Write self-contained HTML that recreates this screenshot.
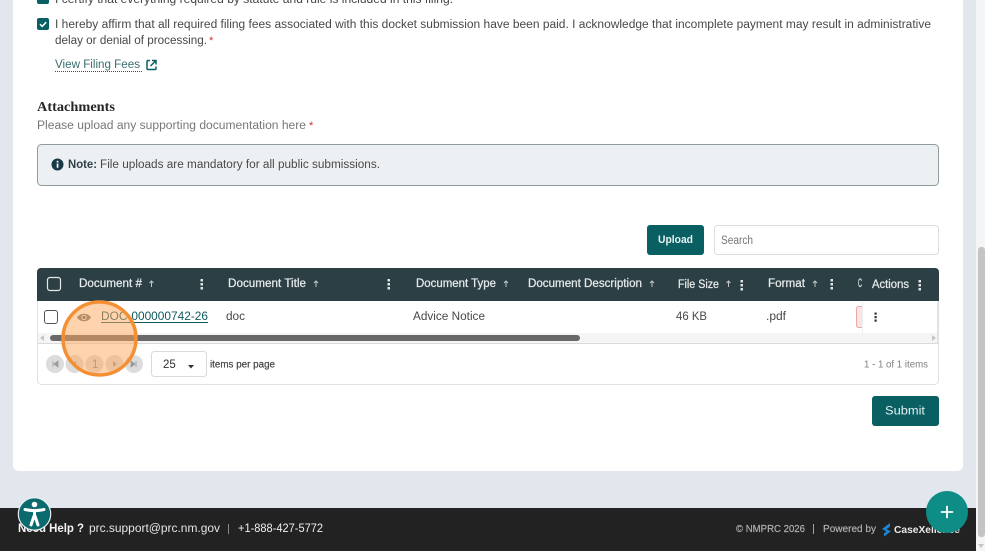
<!DOCTYPE html>
<html><head><meta charset="utf-8"><style>
html,body{margin:0;padding:0;width:985px;height:551px;overflow:hidden;background:#e2e7ee}
svg{display:block;font-family:"Liberation Sans",sans-serif}
</style></head><body>
<svg width="985" height="551" viewBox="0 0 985 551" xmlns="http://www.w3.org/2000/svg">
<rect width="985" height="551" fill="#e2e7ee"/>
<rect x="976" width="9" height="551" fill="#f4f5f6"/>
<rect x="978" y="247" width="7" height="290" rx="3" fill="#c4c4c4"/>
<path d="M13 0H963V465a6 6 0 0 1-6 6H19a6 6 0 0 1-6-6Z" fill="#fff"/>

<rect x="37" y="-8" width="12" height="12" rx="2" fill="#0a5f62"/>
<text x="55" y="3" font-size="11.5" fill="#444" textLength="398" lengthAdjust="spacingAndGlyphs">I certify that everything required by statute and rule is included in this filing.</text>

<rect x="37" y="18" width="12" height="12" rx="2" fill="#0a5f62"/>
<path d="M40 24.200l2.200 2.200 4-4.200" fill="none" stroke="#fff" stroke-width="1.500"/>
<text x="55" y="28" font-size="11.500" fill="#484848" textLength="876" lengthAdjust="spacingAndGlyphs">I hereby affirm that all required filing fees associated with this docket submission have been paid. I acknowledge that incomplete payment may result in administrative</text>
<text x="55" y="44" font-size="11.500" fill="#484848" textLength="152" lengthAdjust="spacingAndGlyphs">delay or denial of processing.</text>
<text x="209" y="44" font-size="11" fill="#c8323c">*</text>
<text x="55" y="68" font-size="11.500" fill="#3a6d70" textLength="85" lengthAdjust="spacingAndGlyphs">View Filing Fees</text>
<line x1="55" y1="71.500" x2="142" y2="71.500" stroke="#0a5f62" stroke-width="1" stroke-dasharray="1 1"/>
<path d="M150 60.500h-2a1 1 0 0 0-1 1v7a1 1 0 0 0 1 1h7a1 1 0 0 0 1-1v-2" fill="none" stroke="#0a5f62" stroke-width="1.500"/>
<path d="M150.500 66l5-5M152 60.500h4v4" fill="none" stroke="#0a5f62" stroke-width="1.500"/>

<text x="37" y="111" font-family="'Liberation Serif',serif" font-weight="700" font-size="14" fill="#262626" textLength="78" lengthAdjust="spacingAndGlyphs">Attachments</text>
<text x="37" y="129" font-size="11.500" fill="#777" textLength="269" lengthAdjust="spacingAndGlyphs">Please upload any supporting documentation here</text>
<text x="309" y="129" font-size="11" fill="#c8323c">*</text>

<rect x="37.500" y="144.500" width="901" height="41" rx="4" fill="#edf0f2" stroke="#8e9a9c"/>
<circle cx="57.500" cy="164.500" r="6" fill="#173a46"/>
<rect x="56.700" y="163.500" width="1.700" height="4.200" fill="#fff"/>
<rect x="56.700" y="160.800" width="1.700" height="1.700" fill="#fff"/>
<text x="68" y="168" font-size="11.500" font-weight="700" fill="#2f4046" textLength="29" lengthAdjust="spacingAndGlyphs">Note:</text>
<text x="100" y="168" font-size="11.500" fill="#484848" textLength="280" lengthAdjust="spacingAndGlyphs">File uploads are mandatory for all public submissions.</text>

<rect x="647" y="225" width="57" height="30" rx="3" fill="#0a5f62"/>
<text x="658" y="243" font-size="11" font-weight="700" fill="#e8f2f2" textLength="35" lengthAdjust="spacingAndGlyphs">Upload</text>
<rect x="714.500" y="225.500" width="224" height="29" rx="3" fill="#fff" stroke="#dcdfe2"/>
<text x="721" y="244" font-size="11.500" fill="#777" textLength="32" lengthAdjust="spacingAndGlyphs">Search</text>

<rect x="37.500" y="268.500" width="901" height="116" rx="4" fill="#fff" stroke="#dfe2e5"/>
<path d="M37 272a4 4 0 0 1 4-4H935a4 4 0 0 1 4 4V301H37Z" fill="#2c3f44"/>
<rect x="47.500" y="277.500" width="13" height="13" rx="2.500" fill="none" stroke="#e6e9ea" stroke-width="1.200"/>

<g font-size="11.500" fill="#e6eaeb" stroke="#e6eaeb" stroke-width="0.250">
<text x="79" y="287" textLength="63" lengthAdjust="spacingAndGlyphs">Document #</text>
<text x="228" y="287" textLength="78" lengthAdjust="spacingAndGlyphs">Document Title</text>
<text x="416" y="287" textLength="80" lengthAdjust="spacingAndGlyphs">Document Type</text>
<text x="528" y="287" textLength="114" lengthAdjust="spacingAndGlyphs">Document Description</text>
<text x="678" y="288" textLength="41" lengthAdjust="spacingAndGlyphs">File Size</text>
<text x="768" y="287" textLength="37" lengthAdjust="spacingAndGlyphs">Format</text>
</g>
<g fill="none" stroke="#bfc7c9" stroke-width="1">
<path d="M151.500 287v-6M149.500 283l2-2 2 2"/>
<path d="M316 287v-6M314 283l2-2 2 2"/>
<path d="M506 287v-6M504 283l2-2 2 2"/>
<path d="M652 287v-6M650 283l2-2 2 2"/>
<path d="M728.500 287v-6M726.500 283l2-2 2 2"/>
<path d="M815 287v-6M813 283l2-2 2 2"/>
</g>
<g fill="#dfe4e5">
<rect x="200.500" y="279" width="2.500" height="2.500"/><rect x="200.500" y="283" width="2.500" height="2.500"/><rect x="200.500" y="287" width="2.500" height="2.500"/>
<rect x="387.500" y="279" width="2.500" height="2.500"/><rect x="387.500" y="283" width="2.500" height="2.500"/><rect x="387.500" y="287" width="2.500" height="2.500"/>
<rect x="740.500" y="280" width="2.500" height="2.500"/><rect x="740.500" y="284" width="2.500" height="2.500"/><rect x="740.500" y="288" width="2.500" height="2.500"/>
<rect x="830.500" y="279" width="2.500" height="2.500"/><rect x="830.500" y="283" width="2.500" height="2.500"/><rect x="830.500" y="287" width="2.500" height="2.500"/>
</g>

<rect x="44.500" y="310.500" width="13" height="13" rx="2.500" fill="#fff" stroke="#555" stroke-width="1"/>
<path d="M77 317.500c3-5 11-5 14 0c-3 5-11 5-14 0Z" fill="#6d7476"/>
<circle cx="84" cy="317.500" r="2.600" fill="#e4e6e6"/>
<circle cx="84" cy="317.500" r="1.500" fill="#50565a"/>
<text x="101" y="320" font-size="11.500" fill="#0f5a5e" textLength="107" lengthAdjust="spacingAndGlyphs">DOC-000000742-26</text>
<line x1="101" y1="322.500" x2="208" y2="322.500" stroke="#0f5a5e" stroke-width="0.900"/>
<g font-size="11.500" fill="#484848">
<text x="226" y="320" textLength="19" lengthAdjust="spacingAndGlyphs">doc</text>
<text x="413" y="320" textLength="72" lengthAdjust="spacingAndGlyphs">Advice Notice</text>
<text x="676" y="320" textLength="31" lengthAdjust="spacingAndGlyphs">46 KB</text>
<text x="766" y="320" textLength="20" lengthAdjust="spacingAndGlyphs">.pdf</text>
</g>
<rect x="856.500" y="306.500" width="12" height="21" rx="2" fill="#fbe4e4" stroke="#e8a9a9"/>

<rect x="38" y="333" width="900" height="10" fill="#f5f5f5"/>
<rect x="50" y="335" width="530" height="6" rx="3" fill="#696969"/>
<path d="M44 335v6l-4-3Z" fill="#c4c4c4"/>
<path d="M932 335v6l4-3Z" fill="#c4c4c4"/>
<line x1="38" y1="343.500" x2="938" y2="343.500" stroke="#d8dbdd"/>

<rect x="863" y="302" width="75" height="31" fill="#fff"/>
<line x1="862.500" y1="302" x2="862.500" y2="333" stroke="#eceeef"/>
<line x1="937.500" y1="302" x2="937.500" y2="343" stroke="#dfe2e5"/>
<rect x="859" y="269" width="79" height="32" fill="#2c3f44"/>
<text x="858" y="287" font-size="11.500" fill="#e6eaeb" stroke="#e6eaeb" stroke-width="0.250" textLength="4" lengthAdjust="spacingAndGlyphs">C</text>
<rect x="862" y="269" width="76" height="32" fill="#2c3f44"/>
<text x="872" y="288" font-size="11.500" fill="#e6eaeb" stroke="#e6eaeb" stroke-width="0.250" textLength="37" lengthAdjust="spacingAndGlyphs">Actions</text>
<g fill="#dfe4e5"><rect x="918.500" y="280" width="2.500" height="2.500"/><rect x="918.500" y="284" width="2.500" height="2.500"/><rect x="918.500" y="288" width="2.500" height="2.500"/></g>
<g fill="#333"><rect x="874.500" y="312.500" width="2.200" height="2.200"/><rect x="874.500" y="316" width="2.200" height="2.200"/><rect x="874.500" y="319.500" width="2.200" height="2.200"/></g>

<g fill="#dcdcdc">
<circle cx="55" cy="364" r="9"/><circle cx="74.500" cy="364" r="9"/><circle cx="94.500" cy="364" r="9"/><circle cx="114.500" cy="364" r="9"/><circle cx="134" cy="364" r="9"/>
</g>
<path d="M53 361v6M58 361v6l-4-3Z" stroke="#9a9a9a" fill="#9a9a9a" stroke-width="0.800"/>
<path d="M76 361v6l-4-3Z" fill="#9a9a9a"/>
<path d="M113 361v6l4-3Z" fill="#9a9a9a"/>
<path d="M136 361v6M131 361v6l4-3Z" stroke="#9a9a9a" fill="#9a9a9a" stroke-width="0.800"/>
<text x="92" y="368" font-size="11.500" fill="#888">1</text>

<rect x="151.500" y="351.500" width="55" height="25" rx="3" fill="#fff" stroke="#d8dbdd"/>
<text x="163" y="368" font-size="11.500" fill="#333">25</text>
<path d="M188 365h6l-3 3.500Z" fill="#333"/>
<text x="210" y="367.500" font-size="10" fill="#444" stroke="#444" stroke-width="0.200" textLength="65" lengthAdjust="spacingAndGlyphs">items per page</text>
<text x="864" y="367.500" font-size="10.500" fill="#808080" textLength="64" lengthAdjust="spacingAndGlyphs">1 - 1 of 1 items</text>

<rect x="872" y="396" width="67" height="30" rx="3" fill="#0a5f62"/>
<text x="885" y="414.500" font-size="11.500" fill="#e4f0f0" textLength="40" lengthAdjust="spacingAndGlyphs">Submit</text>

<circle cx="99.500" cy="338.500" r="36.500" fill="#ffa85c" fill-opacity="0.500" stroke="#f58f34" stroke-width="3.500"/>

<rect y="508" width="976" height="43" fill="#222"/>
<text x="18" y="532" font-size="11.500" font-weight="700" fill="#f4f4f4" textLength="66" lengthAdjust="spacingAndGlyphs">Need Help ?</text>
<text x="89" y="532" font-size="11.500" fill="#e6e6e6" textLength="131" lengthAdjust="spacingAndGlyphs">prc.support@prc.nm.gov</text>
<rect x="228" y="524" width="1" height="10" fill="#8a8a8a"/>
<text x="238" y="532" font-size="11.500" fill="#f0f0f0" textLength="85" lengthAdjust="spacingAndGlyphs">+1-888-427-5772</text>
<circle cx="34.500" cy="514" r="16.200" fill="#0a6a6d" stroke="#e8eef0" stroke-width="1.200"/>
<circle cx="34.500" cy="504.500" r="2.800" fill="#fff"/>
<path d="M25 509.500c6.500 1.500 12.500 1.500 19 0M34.500 511v5M34 516l-3 9M35 516l3 9" fill="none" stroke="#fff" stroke-width="3" stroke-linecap="round"/>

<text x="736" y="532" font-size="10.500" fill="#b0b0b0" stroke="#b0b0b0" stroke-width="0.200" textLength="69" lengthAdjust="spacingAndGlyphs">© NMPRC 2026</text>
<rect x="813" y="524" width="1" height="10" fill="#a0a0a0"/>
<text x="823" y="532" font-size="10.500" fill="#b0b0b0" stroke="#b0b0b0" stroke-width="0.200" textLength="53" lengthAdjust="spacingAndGlyphs">Powered by</text>
<path d="M882 529l8-6v3.500l-3.500 2.800 4.500 2-7 5.200v-3l2.500-2Z" fill="#1b87d6"/>
<text x="894" y="533" font-size="10.500" font-weight="700" fill="#e8e8e8" textLength="66" lengthAdjust="spacingAndGlyphs">CaseXellence</text>

<circle cx="947" cy="512" r="21" fill="#0e8c86"/>
<path d="M947 506.500v11M941.500 512h11" stroke="#fff" stroke-width="1.800" stroke-linecap="round"/>
<path d="M978 544h6l-3 4Z" fill="#c4c4c4"/>
</svg>
</body></html>
